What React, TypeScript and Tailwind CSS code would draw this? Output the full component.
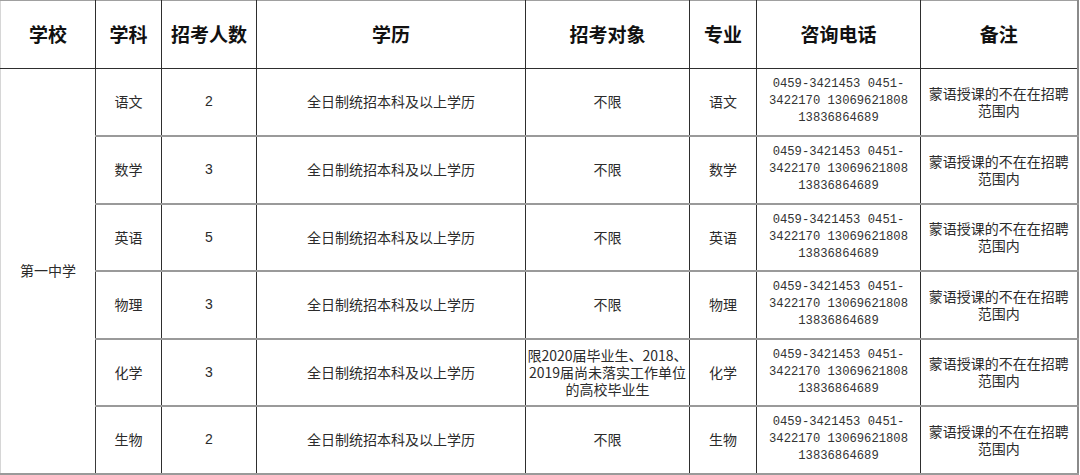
import React from "react";

// one row per subject
interface Row {
  subject: string;
  count: number;
  target: string[];
}

const rows: Row[] = [
  { subject: "语文", count: 2, target: ["不限"] },
  { subject: "数学", count: 3, target: ["不限"] },
  { subject: "英语", count: 5, target: ["不限"] },
  { subject: "物理", count: 3, target: ["不限"] },
  {
    subject: "化学",
    count: 3,
    target: ["限2020届毕业生、2018、", "2019届尚未落实工作单位", "的高校毕业生"],
  },
  { subject: "生物", count: 2, target: ["不限"] },
];

const headers = ["学校", "学科", "招考人数", "学历", "招考对象", "专业", "咨询电话", "备注"];

const phones = ["0459-3421453 0451-", "3422170 13069621808", "13836864689"];

const App = () => {
  return (
    <div className="w-[1080px] h-[475px] bg-white overflow-hidden font-['Noto_Sans_CJK_SC',sans-serif]">
      <table className="table-fixed border-collapse w-[1077px] border-l border-l-[#d6d6d6] border-t border-t-[#a0a0a0] border-r-2 border-r-[#8a8a8a] border-b-2 border-b-[#9a9a9a]">
        <colgroup>
          <col className="w-[95px]" />
          <col className="w-[66px]" />
          <col className="w-[95px]" />
          <col className="w-[269px]" />
          <col className="w-[164px]" />
          <col className="w-[67px]" />
          <col className="w-[164px]" />
          <col className="w-[157px]" />
        </colgroup>
        <thead>
          <tr className="h-[68px]">
            {headers.map((h, i) => (
              <th
                key={i}
                className={`p-0 text-center align-middle text-[19px] font-bold text-[#111] border-b border-b-[#2e2e2e] ${
                  i < headers.length - 1 ? "border-r border-r-[#2e2e2e]" : ""
                }`}
              >
                {h}
              </th>
            ))}
          </tr>
        </thead>
        <tbody className="text-[14px] leading-[17px] text-[#2b2b2b]">
          {rows.map((r, i) => (
            <tr key={i} className={i % 2 === 0 ? "h-[67px]" : "h-[68px]"}>
              {i === 0 && (
                <td rowSpan={6} className="p-0 text-center align-middle border-r border-r-[#3a3a3a]">
                  第一中学
                </td>
              )}
              <td className="p-0 text-center border-r border-r-[#2e2e2e] border-b-2 border-b-[#9a9a9a]">
                {r.subject}
              </td>
              <td className="p-0 text-center border-r border-r-[#2e2e2e] border-b-2 border-b-[#9a9a9a] font-['Liberation_Sans',sans-serif]">
                {r.count}
              </td>
              <td className="p-0 text-center border-r border-r-[#2e2e2e] border-b-2 border-b-[#9a9a9a]">
                全日制统招本科及以上学历
              </td>
              <td className="p-0 text-center border-r border-r-[#2e2e2e] border-b-2 border-b-[#9a9a9a]">
                {r.target.map((t, k) => (
                  <div key={k} className="whitespace-nowrap">
                    {t}
                  </div>
                ))}
              </td>
              <td className="p-0 text-center border-r border-r-[#2e2e2e] border-b-2 border-b-[#9a9a9a]">
                {r.subject}
              </td>
              <td className="p-0 text-center border-r border-r-[#2e2e2e] border-b-2 border-b-[#9a9a9a] font-['Liberation_Mono',monospace] text-[12.2px] text-[#333]">
                {phones.map((p, k) => (
                  <div key={k} className="whitespace-pre leading-[17px]">
                    {p}
                  </div>
                ))}
              </td>
              <td className="p-0 text-center border-b-2 border-b-[#9a9a9a]">
                <div>蒙语授课的不在在招聘</div>
                <div>范围内</div>
              </td>
            </tr>
          ))}
        </tbody>
      </table>
    </div>
  );
};

export default App;
